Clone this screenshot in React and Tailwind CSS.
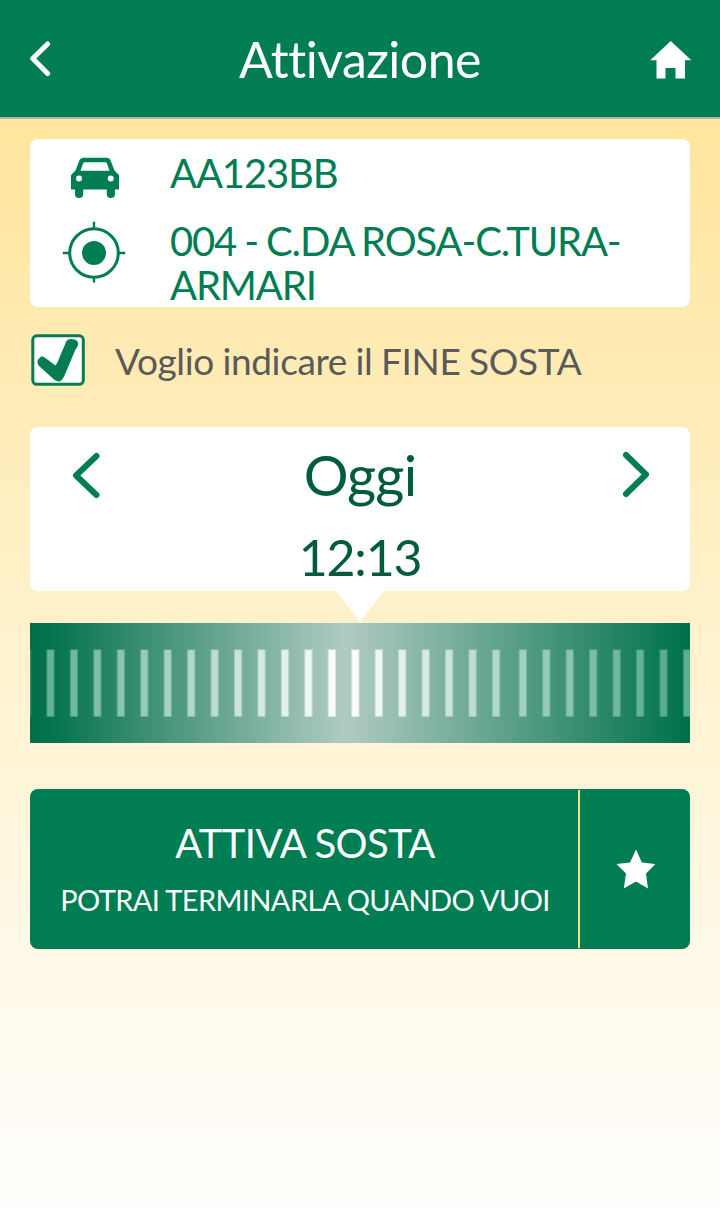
const ticks = Array.from({ length: 29 }, (_, i) => {
  const n = i - 1;
  return 16.9 + n * 23.45 + (n > 19 ? 3.35 : 0);
});

function Chevron({ className, d, width }) {
  return (
    <svg className={className} viewBox="0 0 30 50" fill="none" stroke="currentColor" strokeWidth={width} strokeLinecap="round" strokeLinejoin="round">
      <path d={d} />
    </svg>
  );
}

function CarIcon() {
  return (
    <svg className="mt-[18px] ml-10 h-[42px] w-[50px]" viewBox="0 0 50 42" fill="#007d52">
      <path fillRule="evenodd" d="M13 .7H37Q39.500 .7 40.500 3.200L44.500 13.500L49 18V32.500H45V37A4 4 0 0 1 36.800 37V32.500H13.200V37A4 4 0 0 1 5 37V32.500H1V18L5.500 13.500L9.500 3.200Q10.500 .7 13 .7ZM14.500 5.200Q13.500 5.200 13 6.700L10.500 13.700H39.500L37 6.700Q36.500 5.200 35.500 5.200ZM9 18.500A3 3 0 1 0 9 24.500A3 3 0 1 0 9 18.500ZM40.700 18.500A3 3 0 1 0 40.700 24.500A3 3 0 1 0 40.700 18.500Z" />
    </svg>
  );
}

function TargetIcon() {
  return (
    <svg className="mt-[13px] ml-8 h-16 w-16" viewBox="0 0 64 64" fill="none" stroke="#007d52">
      <circle cx="32" cy="32" r="24.300" strokeWidth="3" />
      <circle cx="32" cy="32" r="12" fill="#007d52" stroke="none" />
      <path strokeWidth="2.400" d="M32 .8V8M32 55V61.500M.8 32H8M56 32H63.200" />
    </svg>
  );
}

export default function App() {
  return (
    <div className="flex h-[1231px] w-[720px] flex-col overflow-hidden bg-linear-to-b from-[#ffe291] to-white font-['Lato',sans-serif] [font-variant-ligatures:none]">
      <header className="flex h-[119px] shrink-0 items-center justify-between border-b-2 border-[#b3b1b1] bg-[#007d52] px-[30px] text-white">
        <div className="w-[42px]">
          <Chevron className="h-[50px] w-[30px]" d="M17.600 10L2.800 24.500L17.600 39.500" width="5" />
        </div>
        <h1 className="-ml-0.5 text-[50px] leading-none tracking-[-0.5px]">Attivazione</h1>
        <svg className="-mr-0.5 h-[40px] w-[42px]" viewBox="0 0 42 40" fill="currentColor">
          <path d="M20.700 2L41.300 21.200H35V39.500H25.500V29H15.500V39.500H6.500V21.200H.3Z" />
        </svg>
      </header>

      <main className="flex flex-col px-[30px] pt-5">
        <section className="grid h-[168px] grid-cols-[140px_1fr] grid-rows-[69px_99px] rounded-lg bg-white text-[40px] leading-[44px] tracking-[-1.15px] text-[#007d52] [word-spacing:-1px]">
          <CarIcon />
          <p className="pt-3">AA123BB</p>
          <TargetIcon />
          <p className="pt-[11px]">
            004 - C.DA ROSA-C.TURA-
            <br />
            ARMARI
          </p>
        </section>

        <label className="mt-[26px] flex h-[54px] items-center">
          <svg className="h-[54px] w-[56px] shrink-0" viewBox="0 0 56 54" fill="none" stroke="#067c51">
            <rect x="2.800" y="2.800" width="50.500" height="48.500" rx="4" fill="white" strokeWidth="3" />
            <path fill="#067c51" stroke="none" d="M36.500 8Q38.500 5.500 42 6L46 7Q48.800 9 48 12.500L45 17.500L35 41.500Q33 46.500 30 48.500Q27 49 24 46.500L9 33Q6.500 29.500 8 26.500L11 23.500Q13.500 23 16 25.500L25.500 32.500Q28 29.500 29 25.500L35 11.500Z" />
          </svg>
          <span className="ml-[29px] pt-px text-[37px] leading-[44px] tracking-[-0.35px] text-[#5a5a5a] [word-spacing:-0.6px]">Voglio indicare il FINE SOSTA</span>
        </label>

        <section className="mt-10 h-[164px] rounded-lg bg-white text-[#005c3d]">
          <div className="flex h-[96px] items-center justify-between px-10">
            <Chevron className="h-[50px] w-[30px] text-[#007d52]" d="M26.500 6L6 25.500L26.500 45" width="6" />
            <div className="text-[56px] leading-[64px] tracking-[-0.8px]">Oggi</div>
            <Chevron className="h-[50px] w-[30px] text-[#007d52]" d="M6 5L26 24.500L6 44" width="6" />
          </div>
          <div className="flex h-[68px] items-center justify-center text-[50px] leading-none tracking-[-1.2px]">12:13</div>
        </section>

        <svg className="h-8 w-[48px] self-center" viewBox="0 0 48 32" fill="white">
          <path d="M0 0H48L24 30.500Z" />
        </svg>

        <svg className="h-[120px] w-[660px]" viewBox="0 0 660 120">
          <defs>
            <linearGradient id="dial">
              <stop offset="0" stopColor="#006e47" />
              <stop offset=".04" stopColor="#07744f" />
              <stop offset=".477" stopColor="#b0cbc1" />
              <stop offset=".96" stopColor="#0b7852" />
              <stop offset="1" stopColor="#00704a" />
            </linearGradient>
          </defs>
          <rect width="660" height="120" fill="url(#dial)" />
          {ticks.map((x, i) => {
            const t = Math.min(1, Math.max(0, Math.abs(x - 311) - 12) / 300);
            return (
              <g key={i} fill={`rgb(${255 - 160 * t} ${255 - 78 * t} ${255 - 106 * t})`}>
                <rect x={x - 0.6} y="26.200" width="8.400" height="67.800" rx="1" opacity=".5" />
                <rect x={x + 0.5} y="27.200" width="6.200" height="65.800" opacity=".9" />
              </g>
            );
          })}
        </svg>

        <div className="mt-[46px] flex h-40 overflow-hidden rounded-lg bg-[#007d52] text-white">
          <button className="flex w-[550px] flex-col items-center pt-8">
            <span className="text-[40px] leading-[44px] tracking-[-0.6px]">ATTIVA SOSTA</span>
            <span className="mt-[15px] text-[29px] leading-10 tracking-[-0.6px] whitespace-nowrap">POTRAI TERMINARLA QUANDO VUOI</span>
          </button>
          <div className="-ml-0.5 h-[158px] w-0.5 self-center bg-[#ffe07f]" />
          <button className="flex flex-1 items-center justify-center">
            <svg className="h-[40px] w-[40px]" viewBox="0 0 40 40" fill="currentColor">
              <path d="M21 .5L26.800 13.500L40.500 15L31 24.500L33 39.500L21 32.500L8.800 39.500L11 24.500L1.500 15L15 13.500Z" />
            </svg>
          </button>
        </div>
      </main>
    </div>
  );
}
